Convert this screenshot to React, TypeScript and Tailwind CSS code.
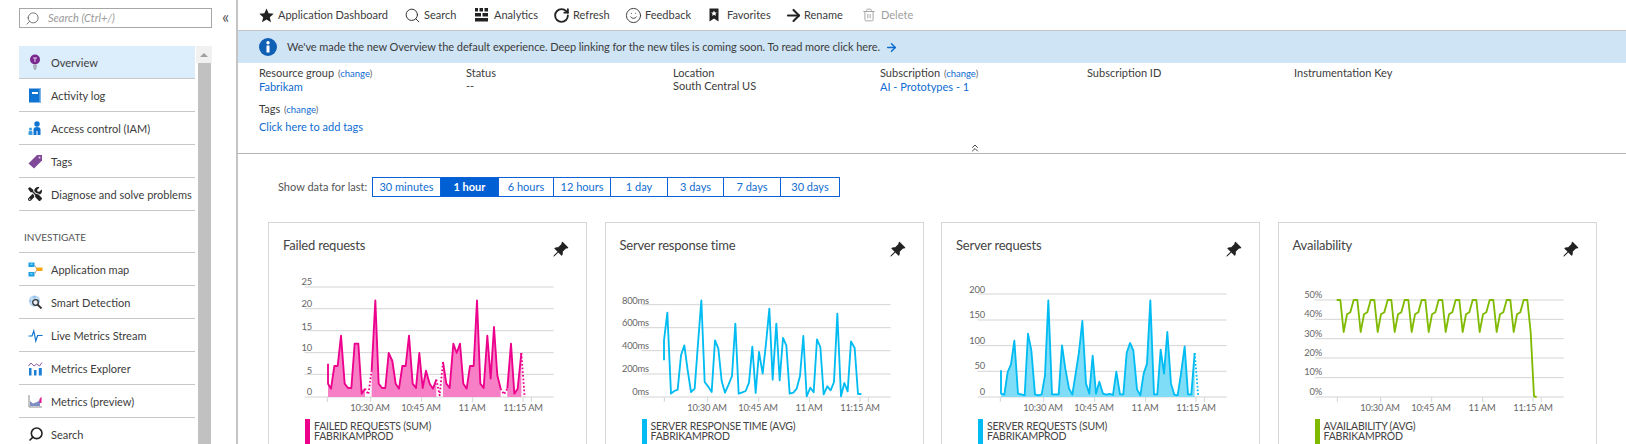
import { ArrowRight, ChevronsUp, RotateCw, Search, Smile, Trash2 } from 'lucide-react';
import { BsPinAngleFill } from 'react-icons/bs';
import { FaTools } from 'react-icons/fa';
import type { ReactNode } from 'react';

type Point = [number, number];

type Chart = {
  title: string;
  legend: string;
  color: string;
  fill?: string;
  left: number; // card left edge in 3x chart units
  grid: number[];
  labels: string[];
  labelY: number[];
  points: Point[];
  dotted: number[]; // index of the segment's first point
};

const FAILED: Point[] = [
  [235, 460], [235, 520], [244, 535], [254, 467], [264, 467], [274, 376], [285, 520], [295, 533], [305, 533], [315, 400],
  [326, 400], [336, 550], [346, 535], [356, 552], [366, 480], [377, 270], [387, 520], [397, 533], [407, 533], [417, 428],
  [428, 452], [438, 520], [448, 535], [458, 467], [468, 467], [478, 376], [489, 520], [499, 533], [509, 428], [519, 533],
  [529, 481], [540, 520], [550, 535], [560, 508], [570, 555], [580, 455], [590, 520], [600, 533], [611, 400], [621, 428],
  [631, 400], [641, 520], [651, 535], [661, 467], [672, 467], [682, 270], [692, 520], [702, 533], [713, 376], [723, 505],
  [733, 350], [743, 495], [753, 535], [763, 552], [773, 535], [784, 400], [794, 550], [804, 535], [815, 428], [825, 560],
];

const RESPONSE: Point[] = [
  [268, 450], [268, 390], [278, 307], [289, 550], [299, 542], [309, 538], [319, 435], [329, 405], [339, 480], [349, 545],
  [360, 535], [370, 400], [380, 270], [390, 515], [400, 528], [411, 545], [421, 390], [431, 415], [441, 512], [451, 547],
  [462, 522], [472, 497], [482, 340], [492, 550], [503, 546], [513, 542], [523, 517], [533, 409], [543, 548], [553, 425],
  [564, 490], [574, 400], [584, 295], [594, 508], [605, 340], [615, 510], [625, 383], [635, 405], [645, 550], [656, 547],
  [666, 535], [676, 497], [686, 377], [696, 558], [707, 532], [717, 546], [727, 387], [737, 410], [747, 552], [758, 528],
  [768, 540], [778, 515], [788, 310], [799, 558], [809, 518], [819, 543], [829, 393], [840, 413], [850, 551], [860, 551],
];

const REQUESTS: Point[] = [
  [304, 480], [304, 550], [314, 553], [324, 485], [334, 462], [344, 391], [355, 550], [365, 552], [375, 555], [385, 370],
  [395, 420], [406, 552], [416, 555], [426, 552], [436, 495], [446, 270], [457, 552], [467, 552], [477, 552], [487, 405],
  [497, 475], [508, 535], [518, 553], [528, 490], [538, 425], [548, 332], [559, 520], [569, 550], [579, 436], [589, 550],
  [599, 514], [610, 550], [620, 553], [630, 551], [640, 554], [650, 484], [661, 552], [671, 552], [681, 428], [691, 398],
  [701, 420], [712, 537], [722, 555], [732, 490], [742, 460], [752, 270], [763, 552], [773, 552], [783, 418], [793, 490],
  [803, 365], [814, 520], [824, 553], [834, 555], [844, 490], [855, 408], [865, 552], [875, 552], [885, 428], [896, 560],
];

const AVAILABILITY: Point[] = [
  ...Array.from({ length: 11 }).flatMap((_, k): Point[] => {
    const x = 336 + 51 * k;
    return [[x, 269], [x + 11, 269], [x + 21, 365], [x + 31, 312], [x + 41, 306]];
  }),
  [897, 269], [908, 269], [918, 365], [928, 558], [936, 560],
];

const CHARTS: Chart[] = [
  {
    title: 'Failed requests',
    legend: 'FAILED REQUESTS (SUM)',
    color: '#ec008c',
    fill: '#f67fc5',
    left: 55,
    grid: [230, 295, 361, 427, 492, 560],
    labels: ['25', '20', '15', '10', '5', '0'],
    labelY: [216, 282, 349, 414, 481, 546],
    points: FAILED,
    dotted: [12, 13, 33, 34, 52, 53, 58],
  },
  {
    title: 'Server response time',
    legend: 'SERVER RESPONSE TIME (AVG)',
    color: '#00bcf2',
    left: 91,
    grid: [283, 352, 421, 491, 560],
    labels: ['800ms', '600ms', '400ms', '200ms', '0ms'],
    labelY: [271, 339, 408, 477, 546],
    points: RESPONSE,
    dotted: [],
  },
  {
    title: 'Server requests',
    legend: 'SERVER REQUESTS (SUM)',
    color: '#00bcf2',
    fill: '#80ddf8',
    left: 124,
    grid: [251, 329, 406, 483, 560],
    labels: ['200', '150', '100', '50', '0'],
    labelY: [239, 315, 393, 468, 546],
    points: REQUESTS,
    dotted: [58],
  },
  {
    title: 'Availability',
    legend: 'AVAILABILITY (AVG)',
    color: '#7fba00',
    left: 160,
    grid: [269, 327, 385, 443, 502, 560],
    labels: ['50%', '40%', '30%', '20%', '10%', '0%'],
    labelY: [255, 312, 371, 429, 486, 546],
    points: AVAILABILITY,
    dotted: [],
  },
];

const TIMES = [
  ['10:30 AM', 306],
  ['10:45 AM', 459],
  ['11 AM', 612],
  ['11:15 AM', 765],
] as const;

const TICKS = [178, 308, 461, 614, 765, 790];

const RANGES: [string, string][] = [
  ['30 minutes', 'w-[68px]'],
  ['1 hour', 'w-[58px]'],
  ['6 hours', 'w-[55px]'],
  ['12 hours', 'w-[57px]'],
  ['1 day', 'w-[57px]'],
  ['3 days', 'w-[56px]'],
  ['7 days', 'w-[57px]'],
  ['30 days', 'w-[58px]'],
];

function toPath(points: Point[]) {
  return points.map((p) => p.join(',')).join(' ');
}

function splitRuns(points: Point[], dotted: number[]) {
  const runs: { points: Point[]; dotted: boolean }[] = [];
  for (let i = 0; i < points.length - 1; i++) {
    const isDotted = dotted.includes(i);
    const last = runs[runs.length - 1];
    if (last && last.dotted === isDotted) {
      last.points.push(points[i + 1]);
    } else {
      runs.push({ points: [points[i], points[i + 1]], dotted: isDotted });
    }
  }
  return runs;
}

function ChartCard({ chart }: { chart: Chart }) {
  const origin = chart.left + 3;
  const runs = splitRuns(chart.points, chart.dotted);
  return (
    <div className="h-[260px] w-[319px] shrink-0 border border-[#d6d6d6]">
      <div className="flex h-[53.67px] items-start justify-between pl-[14px] pr-[17px]">
        <h3 className="mt-[13px] text-[13px] leading-[19px] tracking-[-0.2px] text-[#444]">{chart.title}</h3>
        <BsPinAngleFill className="mt-[18px] h-[17px] w-[17px] text-[#222]" />
      </div>
      <svg className="block h-[136.67px] w-[317px]" viewBox="0 0 951 410">
        <g transform={`translate(${-origin} -200)`}>
          {chart.grid.map((y) => (
            <line key={y} x1={chart.left + 110} x2={chart.left + 857} y1={y} y2={y} stroke="#d4d4d4" strokeWidth="3" />
          ))}
          {TICKS.map((x) => (
            <line key={x} x1={chart.left + x} x2={chart.left + x} y1={560} y2={575} stroke="#d4d4d4" strokeWidth="3" />
          ))}
          {chart.labels.map((label, i) => (
            <text
              key={label}
              x={chart.left + 132}
              y={chart.labelY[i] + 9}
              textAnchor="end"
              className="fill-[#666] text-[28px] tracking-[-0.5px]"
            >
              {label}
            </text>
          ))}
          {TIMES.map(([label, x]) => (
            <text
              key={label}
              x={chart.left + x}
              y={602}
              textAnchor="middle"
              className="fill-[#666] text-[28px] tracking-[-0.5px]"
            >
              {label}
            </text>
          ))}
          {chart.fill &&
            runs
              .filter((r) => !r.dotted)
              .map((r, i) => (
                <polygon
                  key={i}
                  fill={chart.fill}
                  points={`${r.points[0][0]},560 ${toPath(r.points)} ${r.points[r.points.length - 1][0]},560`}
                />
              ))}
          {runs.map((r, i) => (
            <polyline
              key={i}
              fill="none"
              stroke={chart.color}
              strokeWidth="5.5"
              strokeLinejoin="round"
              strokeDasharray={r.dotted ? '5 6' : undefined}
              points={toPath(r.points)}
            />
          ))}
        </g>
      </svg>
      <div className="ml-[36px] mt-[5.67px] flex gap-[4px]">
        <span className="h-[30px] w-[5px] shrink-0" style={{ background: chart.color }} />
        <div className="pt-[2px] text-[10.5px] leading-[10px] tracking-[-0.2px] text-[#444]">
          <div>{chart.legend}</div>
          <div>FABRIKAMPROD</div>
        </div>
      </div>
    </div>
  );
}

function NavRow({ icon, label, active }: { icon: ReactNode; label: string; active?: boolean }) {
  return (
    <div
      className={
        active
          ? 'flex h-[33px] items-center border-b border-[#c8c8c8] bg-[#dcedfb]'
          : 'flex h-[33px] items-center border-b border-[#c8c8c8]'
      }
    >
      <span className="ml-[9px] flex w-[23px] shrink-0 items-center">{icon}</span>
      <span className="whitespace-nowrap pt-[2px] text-[#3c3c3c]">{label}</span>
    </div>
  );
}

function BulbIcon() {
  return (
    <svg width="14" height="16" viewBox="0 0 14 16">
      <circle cx="7" cy="5.500" r="5" fill="#7a2a8f" />
      <path d="M5 4h4M7 4v4" stroke="#e9d3ef" strokeWidth="1" />
      <path d="M5 12h4M5.500 14h3M6.500 15.500h1" stroke="#777" strokeWidth="1" />
    </svg>
  );
}

function BookIcon() {
  return (
    <svg width="14" height="15" viewBox="0 0 14 15">
      <rect x="1" y="0.500" width="12" height="14" fill="#0f74d1" />
      <rect x="11.500" y="0.500" width="1.500" height="14" fill="#7eb4e4" />
      <rect x="4" y="4" width="6" height="2" fill="#fff" />
    </svg>
  );
}

function PeopleIcon() {
  return (
    <svg width="15" height="15" viewBox="0 0 15 15">
      <circle cx="9" cy="3" r="2.700" fill="#0f74d1" />
      <path d="M5.500 14V8.500C5.500 6.800 7 6 9 6s3.500.8 3.500 2.500V14z" fill="#0f74d1" />
      <circle cx="2.500" cy="8" r="1.500" fill="#3a9be0" />
      <path d="M0.500 14v-3c0-.8 1-1.300 2-1.300s2 .5 2 1.300v3z" fill="#3a9be0" />
      <path d="M9 10v4" stroke="#fff" strokeWidth="1" />
    </svg>
  );
}

function TagIcon() {
  return (
    <svg width="15" height="15" viewBox="0 0 15 15">
      <path d="M0.500 9.500L9 1h5v5.500L6 14.500z" fill="#804998" />
      <circle cx="11.500" cy="3.500" r="1" fill="#e3d2ea" />
    </svg>
  );
}

function AppMapIcon() {
  return (
    <svg width="15" height="15" viewBox="0 0 15 15">
      <rect x="0.500" y="0.500" width="6" height="4.500" fill="#1ba1e2" />
      <rect x="0.500" y="10" width="6" height="4.500" fill="#1ba1e2" />
      <rect x="2.500" y="1.500" width="2" height="1.500" fill="#7fd1f5" />
      <rect x="2.500" y="11" width="2" height="1.500" fill="#7fd1f5" />
      <path d="M6.500 3L9 7.500 6.500 12" fill="none" stroke="#a6a6a6" strokeWidth="1" />
      <rect x="8.500" y="5.500" width="6" height="3.500" fill="#f7a711" />
    </svg>
  );
}

function DetectionIcon() {
  return (
    <svg width="15" height="15" viewBox="0 0 15 15">
      <circle cx="6.500" cy="6" r="5.500" fill="#9ac5ec" />
      <path d="M1 4h11M1 8h11M4 1v10M9 1v10" stroke="#e4f0fa" strokeWidth="0.800" />
      <circle cx="7.500" cy="7.500" r="2.800" fill="#e8eef4" stroke="#333" strokeWidth="1.300" />
      <path d="M9.500 9.500l4 4" stroke="#333" strokeWidth="1.800" />
    </svg>
  );
}

function PulseIcon() {
  return (
    <svg width="15" height="15" viewBox="0 0 15 15">
      <path d="M0.500 8h3.500l1.800-5 2 10 1.800-5.500h5" fill="none" stroke="#0f74d1" strokeWidth="1.200" />
    </svg>
  );
}

function ExplorerIcon() {
  return (
    <svg width="15" height="15" viewBox="0 0 15 15">
      <path d="M1 7v7.500h2.500V7zM6 9v5.500h2.500V9zM10.800 7v7.500h3V7z" fill="#1c7fd6" />
      <path d="M0.500 5L3 2l3 3 2.500-2 3 2L14 1.500" fill="none" stroke="#8e5aa8" strokeWidth="1" />
    </svg>
  );
}

function PreviewIcon() {
  return (
    <svg width="15" height="14" viewBox="0 0 15 14">
      <path d="M1 1v12h13" fill="none" stroke="#8a8a8a" strokeWidth="1" />
      <path d="M2 12V7l3 2.500L9 8l3-2v6z" fill="#7e8ec4" />
      <path d="M11.500 5l2-2.500V9h-2z" fill="#e3158f" />
    </svg>
  );
}

function HandleSearch({ className, stroke }: { className: string; stroke: number }) {
  return <Search strokeWidth={stroke} className={`-scale-x-100 ${className}`} />;
}

function AnalyticsIcon() {
  return (
    <svg width="13" height="14" viewBox="0 0 13 14">
      <path d="M0 0h3v3.500H0zM4.500 0h3.500v3.500H4.500zM9.500 0H13v3.500H9.500zM0 5h6v3.500H0zM7.500 5H13v3.500H7.500zM0 10h13v3.500H0z" fill="#222" />
    </svg>
  );
}

function StarIcon() {
  return (
    <svg width="15" height="15" viewBox="0 0 15 15">
      <path d="M7.500 0.500l2.100 4.800 5.100.5-3.900 3.400 1.200 5.100-4.500-2.700-4.500 2.700 1.200-5.100L0.300 5.800l5.100-.5z" fill="#222" />
    </svg>
  );
}

function BookmarkIcon() {
  return (
    <svg width="10" height="14" viewBox="0 0 10 14">
      <path d="M0.500 0.500h9v13L5 10.500l-4.500 3z" fill="#222" />
      <path d="M5 2.500l.9 1.900 2 .2-1.500 1.300.5 2L5 6.800 3.100 7.900l.5-2L2.100 4.600l2-.2z" fill="#fff" />
    </svg>
  );
}

function ToolbarItem({ icon, label, muted, gap }: { icon: ReactNode; label: string; muted?: boolean; gap: string }) {
  return (
    <div className={`flex items-center ${gap}`}>
      {icon}
      <span className={muted ? 'text-[#a0a0a0]' : 'text-[#3c3c3c]'}>{label}</span>
    </div>
  );
}

function Change() {
  return <span className="ml-[1px] text-[9.5px] text-[#666]">(<span className="text-[#0f6cd0]">change</span>)</span>;
}

export default function App() {
  return (
    <div
      className="flex h-[444px] w-[1626px] overflow-hidden whitespace-nowrap bg-white text-[11px]"
      style={{ fontFamily: 'Lato, "Noto Sans", sans-serif' }}
    >
      {/* Left blade menu */}
      <aside className="flex w-[236px] shrink-0 flex-col pl-[19px]">
        <div className="mt-[8px] flex items-center">
          <div className="flex h-[20px] w-[193px] items-center border border-[#a6a6a6]">
            <HandleSearch stroke={1.4} className="ml-[5px] h-[15px] w-[15px] text-[#666]" />
            <span className="ml-[8px] italic text-[#9a9a9a]">Search (Ctrl+/)</span>
          </div>
          <span className="-mt-[3px] ml-[10px] text-[17px] leading-none text-[#555]">«</span>
        </div>
        <div className="mt-[18px] flex min-h-0 flex-1">
          <div className="w-[176px] shrink-0">
            <NavRow active icon={<BulbIcon />} label="Overview" />
            <NavRow icon={<BookIcon />} label="Activity log" />
            <NavRow icon={<PeopleIcon />} label="Access control (IAM)" />
            <NavRow icon={<TagIcon />} label="Tags" />
            <NavRow icon={<FaTools className="h-[14px] w-[14px] text-[#222]" />} label="Diagnose and solve problems" />
            <div className="flex h-[42px] items-end border-b border-[#c8c8c8] pb-[7px] pl-[5px] text-[10px] text-[#555]">
              INVESTIGATE
            </div>
            <NavRow icon={<AppMapIcon />} label="Application map" />
            <NavRow icon={<DetectionIcon />} label="Smart Detection" />
            <NavRow icon={<PulseIcon />} label="Live Metrics Stream" />
            <NavRow icon={<ExplorerIcon />} label="Metrics Explorer" />
            <NavRow icon={<PreviewIcon />} label="Metrics (preview)" />
            <NavRow icon={<HandleSearch stroke={2.4} className="h-[16px] w-[16px] text-[#222]" />} label="Search" />
          </div>
          <div className="ml-[1px] flex w-[16px] shrink-0 flex-col">
            <div className="flex h-[17px] items-center justify-center bg-[#f1f1f1]">
              <span className="h-0 w-0 border-x-[4px] border-b-[4px] border-x-transparent border-b-[#a0a0a0]" />
            </div>
            <div className="ml-[2px] w-[13px] flex-1 bg-[#c1c1c1]" />
          </div>
        </div>
      </aside>

      {/* Main content */}
      <main className="min-w-0 flex-1 border-l-2 border-[#c4c4c4]">
        <div className="flex h-[31px] items-center border-b border-[#c4c4c4] pl-[21px]">
          <ToolbarItem gap="gap-[4px] w-[145px]" icon={<StarIcon />} label="Application Dashboard" />
          <ToolbarItem gap="gap-[3px] w-[71px]" icon={<Search strokeWidth={1.4} className="h-[17px] w-[17px] text-[#333]" />} label="Search" />
          <ToolbarItem gap="gap-[6px] w-[78px]" icon={<AnalyticsIcon />} label="Analytics" />
          <ToolbarItem gap="gap-[3px] w-[72px]" icon={<RotateCw strokeWidth={2.6} className="h-[17px] w-[17px] text-[#222]" />} label="Refresh" />
          <ToolbarItem gap="gap-[3px] w-[84px]" icon={<Smile strokeWidth={1.3} className="h-[17px] w-[17px] text-[#333]" />} label="Feedback" />
          <ToolbarItem gap="gap-[8px] w-[75px]" icon={<BookmarkIcon />} label="Favorites" />
          <ToolbarItem gap="gap-[1px] w-[78px]" icon={<ArrowRight strokeWidth={2.6} className="h-[19px] w-[19px] text-[#222]" />} label="Rename" />
          <ToolbarItem gap="gap-[5px]" muted icon={<Trash2 strokeWidth={1.6} className="h-[14px] w-[14px] text-[#a0a0a0]" />} label="Delete" />
        </div>

        <div className="flex h-[32px] items-center bg-[#cfe4f5] pl-[21px] text-[#3c3c3c]">
          <svg width="18" height="18" viewBox="0 0 18 18">
            <circle cx="9" cy="9" r="9" fill="#0f5fb5" />
            <rect x="7.500" y="7.500" width="3" height="7" fill="#fff" />
            <circle cx="9" cy="4.800" r="1.700" fill="#fff" />
          </svg>
          <span className="ml-[10px] tracking-[-0.07px]">
            We've made the new Overview the default experience. Deep linking for the new tiles is coming soon. To read more click here.
          </span>
          <ArrowRight strokeWidth={2.8} className="ml-[5px] h-[13px] w-[13px] text-[#0f6cd0]" />
        </div>

        <div className="h-[91px] border-b border-[#b4b4b4] pl-[21px] pt-[3px]">
          <div className="grid grid-cols-[207px_207px_207px_207px_207px_207px] leading-[13px] text-[#3c3c3c]">
            <div>
              Resource group <Change />
              <div className="text-[#0f6cd0]">Fabrikam</div>
            </div>
            <div>
              Status
              <div>--</div>
            </div>
            <div>
              Location
              <div>South Central US</div>
            </div>
            <div>
              Subscription <Change />
              <div className="text-[#0f6cd0]">AI - Prototypes - 1</div>
            </div>
            <div>Subscription ID</div>
            <div>Instrumentation Key</div>
          </div>
          <div className="mt-[9px] leading-[14px] text-[#3c3c3c]">
            Tags <Change />
          </div>
          <div className="mt-[3px] leading-[14px] text-[#0f6cd0]">Click here to add tags</div>
          <div className="mt-[8px] pl-[710px]">
            <ChevronsUp className="h-[12px] w-[12px] text-[#444]" />
          </div>
        </div>

        <div className="flex h-[68px] items-start pl-[40px] pt-[23px]">
          <span className="w-[94px] leading-[20px] text-[#555]">Show data for last:</span>
          <div className="flex h-[20px] border border-[#0b62d6]">
            {RANGES.map(([label, width]) => (
              <div
                key={label}
                className={`flex items-center justify-center border-r border-[#0b62d6] last:border-r-0 ${width} ${
                  label === '1 hour' ? 'bg-[#005fd2] font-bold text-white' : 'text-[#0f6cd0]'
                }`}
              >
                {label}
              </div>
            ))}
          </div>
        </div>

        <div className="flex gap-[17.5px] pl-[30px]">
          {CHARTS.map((chart) => (
            <ChartCard key={chart.title} chart={chart} />
          ))}
        </div>
      </main>
    </div>
  );
}
